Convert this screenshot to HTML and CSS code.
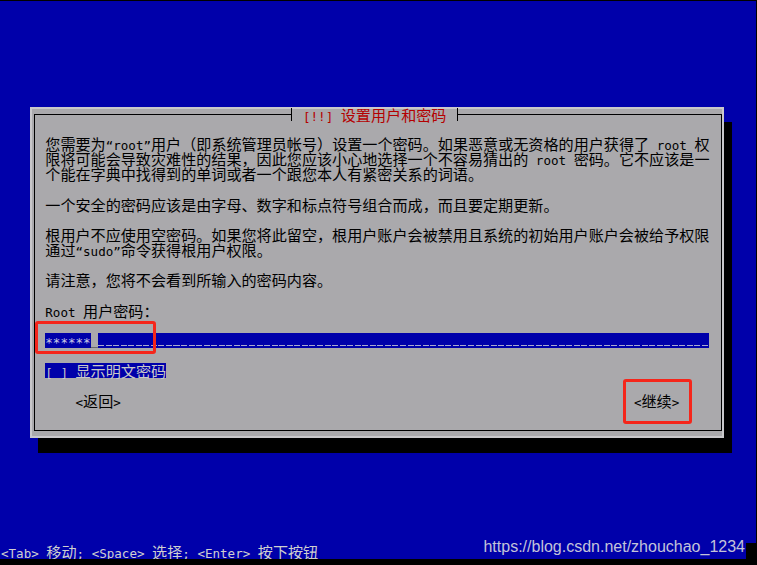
FILE: index.html
```html
<!DOCTYPE html>
<html lang="zh-CN">
<head>
<meta charset="utf-8">
<title>设置用户和密码</title>
<link rel="stylesheet" href="styles.css">
</head>
<body>
<div class="screen">
  <div class="dialog">
    <fieldset class="frame">
      <legend class="title"><span class="a">[!!] </span>设置用户和密码</legend>
      <div class="row">您需要为<span class="a">“root”</span>用户（即系统管理员帐号）设置一个密码。如果恶意或无资格的用户获得了<span class="a"> root </span>权</div>
      <div class="row">限将可能会导致灾难性的结果，因此您应该小心地选择一个不容易猜出的<span class="a"> root </span>密码。它不应该是一</div>
      <div class="row">个能在字典中找得到的单词或者一个跟您本人有紧密关系的词语。</div>
      <div class="row"></div>
      <div class="row">一个安全的密码应该是由字母、数字和标点符号组合而成，而且要定期更新。</div>
      <div class="row"></div>
      <div class="row">根用户不应使用空密码。如果您将此留空，根用户账户会被禁用且系统的初始用户账户会被给予权限</div>
      <div class="row">通过<span class="a">“sudo”</span>命令获得根用户权限。</div>
      <div class="row"></div>
      <div class="row">请注意，您将不会看到所输入的密码内容。</div>
      <div class="row"></div>
      <div class="row"><span class="a">Root </span>用户密码：</div>
      <div class="row"></div>
      <div class="row field">
        <span class="a stars">******</span><span class="a cursor">_</span><span class="blanks"></span>
        <span class="mark mark-field"></span>
      </div>
      <div class="row"></div>
      <div class="row check-row"><span class="check"><span class="a">[ ] </span>显示明文密码</span></div>
      <div class="row"></div>
      <div class="row buttons">
        <span class="btn"><span class="a">&lt;</span>返回<span class="a">&gt;</span></span>
        <span class="btn"><span class="a">&lt;</span>继续<span class="a">&gt;</span><span class="mark mark-btn"></span></span>
      </div>
    </fieldset>
  </div>
  <div class="spacer"></div>
  <div class="status">
    <span class="status-text"><span class="a">&lt;Tab&gt; </span>移动<span class="a">; &lt;Space&gt; </span>选择<span class="a">; &lt;Enter&gt; </span>按下按钮</span>
    <span class="status-edge"></span>
  </div>
  <div class="bottom"></div>
  <div class="watermark">https://blog.csdn.net/zhouchao_1234</div>
</div>
</body>
</html>
```

FILE: styles.css
```css
:root {
  --cell: 7.55px;
  --row: 15.14px;
  --blue: #0000aa;
  --panel: #aaa9ac;
}

html, body {
  margin: 0;
  padding: 0;
  background: var(--blue);
}

body {
  width: 757px;
  height: 565px;
  overflow: hidden;
  font-family: "Noto Sans CJK SC", "DejaVu Sans", sans-serif;
  font-size: 15.1px;
}

.screen {
  position: relative;
  box-sizing: border-box;
  height: 565px;
  border-top: 1px solid #000;
  border-right: 1px solid #000;
  display: flex;
  flex-direction: column;
  background: var(--blue);
}

.a {
  font-family: "DejaVu Sans Mono", "Liberation Mono", monospace;
  font-size: 12.55px;
}

.dialog {
  box-sizing: border-box;
  margin: 106px 0 0 30px;
  width: 694px;
  height: 331px;
  border: 2px solid #c9c8cb;
  background: var(--panel);
  box-shadow: 8px 15px 0 #000;
  display: flex;
  flex-direction: column;
  color: #000;
}

.frame {
  flex: 1;
  min-width: 0;
  margin: -1px 0 5px 2px;
  padding: var(--row) 11.6px 0 10.3px;
  border: 1px solid #000;
}

.title {
  margin-left: 245.7px;
  padding: 0 11px;
  height: 13px;
  line-height: 13px;
  border-left: 1px solid #000;
  border-right: 1px solid #000;
  color: #b40000;
  white-space: pre;
}

.row {
  height: var(--row);
  line-height: var(--row);
  white-space: pre;
}

.field {
  position: relative;
  display: flex;
}

.stars {
  display: block;
  width: calc(var(--cell) * 6);
  background: var(--blue);
  color: #c8c8e6;
  line-height: calc(var(--row) + 5px);
}

.cursor {
  display: block;
  width: var(--cell);
  color: #303030;
}

.blanks {
  display: block;
  flex: 1;
  background-color: var(--blue);
  background-image: repeating-linear-gradient(90deg, #a9a9cf 0 6px, transparent 6px var(--cell));
  background-size: 100% 1px;
  background-position: left bottom 2px;
  background-repeat: no-repeat;
}

.mark {
  position: absolute;
  box-sizing: border-box;
  border: 3px solid #f5261b;
  border-radius: 3px;
}

.mark-field {
  left: -10.3px;
  top: -12px;
  width: 121px;
  height: 33px;
}

.check-row {
  display: flex;
}

.check {
  display: block;
  background: var(--blue);
  color: #c8c8c8;
}

.buttons {
  display: flex;
  justify-content: space-between;
  padding: 0 calc(var(--cell) * 4);
}

.btn {
  position: relative;
}

.mark-btn {
  left: -11.2px;
  top: -14.5px;
  width: 69px;
  height: 45px;
}

.spacer {
  flex: 1;
}

.status {
  display: flex;
  height: 16px;
  line-height: 16px;
  padding-left: 1px;
  color: #cfcfcf;
  white-space: pre;
}

.status-edge {
  margin-left: auto;
  width: 10px;
  background: #000;
}

.bottom {
  height: 6px;
  background: #000;
}

.watermark {
  position: absolute;
  right: 11px;
  bottom: 9px;
  font-family: "Liberation Sans", Arial, sans-serif;
  font-size: 16px;
  line-height: 18px;
  color: #c3c3d9;
  white-space: nowrap;
}
```
